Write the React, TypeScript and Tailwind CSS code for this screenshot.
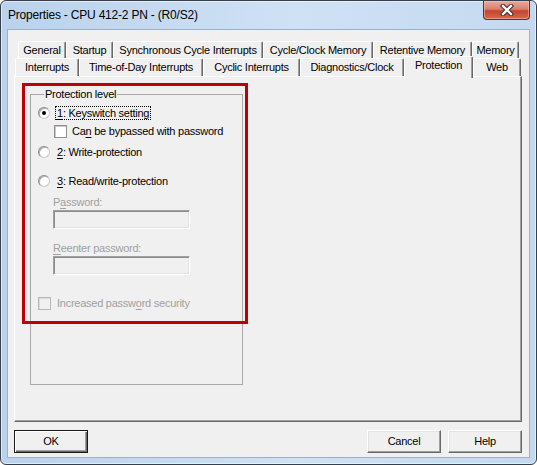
import type { ReactNode } from 'react';

type TabDef = { label: string; w: string; active?: boolean };

const backRow: TabDef[] = [
  { label: 'General', w: 'w-[48px]' },
  { label: 'Startup', w: 'w-[47px]' },
  { label: 'Synchronous Cycle Interrupts', w: 'w-[150px]' },
  { label: 'Cycle/Clock Memory', w: 'w-[110px]' },
  { label: 'Retentive Memory', w: 'w-[99px]' },
  { label: 'Memory', w: 'w-[47px]' },
];

const frontRow: TabDef[] = [
  { label: 'Interrupts', w: 'w-[64px]' },
  { label: 'Time-of-Day Interrupts', w: 'w-[124px]' },
  { label: 'Cyclic Interrupts', w: 'w-[97px]' },
  { label: 'Diagnostics/Clock', w: 'w-[104px]' },
  { label: 'Protection', w: 'w-[69px]', active: true },
  { label: 'Web', w: 'w-[48px]' },
];

function Tab({ tab, tall }: { tab: TabDef; tall?: boolean }) {
  if (tab.active) {
    return (
      <div
        className={`${tab.w} relative z-10 flex h-[22px] -mb-[2px] shrink-0 items-center justify-center rounded-t-[2px] border-l border-t border-r border-l-white border-t-white border-r-[#696969] bg-[#f0f0f0] pb-[4px] shadow-[inset_-1px_0_0_#a0a0a0]`}
      >
        {tab.label}
      </div>
    );
  }
  return (
    <div
      className={`${tab.w} ${tall ? 'h-[18px]' : 'h-[17px]'} flex shrink-0 items-center justify-center rounded-t-[2px] border-l border-t border-r border-l-white border-t-white border-r-[#696969] bg-[#f0f0f0] shadow-[inset_-1px_0_0_#a0a0a0]`}
    >
      {tab.label}
    </div>
  );
}

// mnemonic letter, underlined like a Win32 accelerator
function U({ children }: { children: ReactNode }) {
  return <span className="underline underline-offset-[2px]">{children}</span>;
}

function Radio({ checked }: { checked?: boolean }) {
  return (
    <span className="flex h-[12px] w-[12px] shrink-0 items-center justify-center rounded-full border border-[#8a8a8a] border-r-[#c8c8c8] border-b-[#c8c8c8] bg-white shadow-[inset_1px_1px_0_#b4b4b4]">
      {checked && <span className="h-[4px] w-[4px] rounded-full bg-black" />}
    </span>
  );
}

function Check({ disabled }: { disabled?: boolean }) {
  return (
    <span
      className={
        disabled
          ? 'h-[13px] w-[13px] shrink-0 border border-[#b9b9b9] bg-[#f0f0f0] shadow-[inset_1px_1px_0_#dadada]'
          : 'h-[13px] w-[13px] shrink-0 border border-[#8e8f8f] bg-white shadow-[inset_1px_1px_0_#c9c9c9]'
      }
    />
  );
}

function DisabledInput() {
  return (
    <div className="ml-[15px] mt-[1px] h-[19px] w-[137px] border border-t-[#a0a0a0] border-l-[#a0a0a0] border-r-white border-b-white bg-[#f0f0f0] shadow-[inset_1px_1px_0_#8c8c8c,inset_-1px_-1px_0_#e3e3e3]" />
  );
}

function Button({ children, isDefault, className = '' }: { children: ReactNode; isDefault?: boolean; className?: string }) {
  return (
    <button
      className={
        isDefault
          ? `${className} flex h-[23px] w-[74px] items-center justify-center border border-[#1a1a1a] bg-[#f0f0f0] shadow-[inset_1px_1px_0_#fff,inset_-1px_-1px_0_#696969,inset_-2px_-2px_0_#a0a0a0]`
          : `${className} flex h-[23px] w-[74px] items-center justify-center border border-t-white border-l-white border-r-[#696969] border-b-[#696969] bg-[#f0f0f0] shadow-[inset_-1px_-1px_0_#a0a0a0,inset_1px_1px_0_#e3e3e3]`
      }
    >
      {children}
    </button>
  );
}

function CloseButton() {
  return (
    <div className="mr-[6px] flex h-[19px] w-[47px] items-center justify-center rounded-b-[4px] border border-t-0 border-[#6b2a22] bg-[linear-gradient(180deg,#e9a99b_0%,#d9826f_45%,#c4442c_55%,#d56a4e_100%)] shadow-[inset_0_0_0_1px_rgba(255,200,190,0.5)]">
      <svg width="14" height="12" viewBox="0 0 14 12">
        <path d="M3 2 L11 10 M11 2 L3 10" stroke="#3d2622" strokeWidth="4.4" strokeLinecap="square" />
        <path d="M3 2 L11 10 M11 2 L3 10" stroke="#ffffff" strokeWidth="2.4" strokeLinecap="square" />
      </svg>
    </div>
  );
}

export default function App() {
  return (
    <div className="relative flex h-[465px] w-[537px] flex-col rounded-[6px] border border-[#363f4c] bg-[linear-gradient(90deg,#bad2ec_0%,#cfe1f5_55%,#c4d9f0_100%)] shadow-[inset_0_0_0_1px_rgba(255,255,255,0.55)] font-['Liberation_Sans',Arial,sans-serif] text-[11px] leading-[13px] tracking-[-0.25px] text-black">
      {/* title bar */}
      <div className="flex h-[28px] shrink-0 items-start justify-between">
        <span className="pl-[7px] pt-[7px] text-[12px] leading-[15px] tracking-[-0.2px]">
          Properties - CPU 412-2 PN - (R0/S2)
        </span>
        <CloseButton />
      </div>

      {/* client area */}
      <div className="mx-[6px] mb-[6px] flex flex-1 flex-col border border-[#9db0c6] bg-[#f0f0f0] pl-[6px] pr-[7px]">
        <div className="mt-[11px] ml-[4px] flex">
          {backRow.map((t) => (
            <Tab key={t.label} tab={t} />
          ))}
        </div>
        <div className="ml-[1px] flex h-[18px] items-end">
          {frontRow.map((t) => (
            <Tab key={t.label} tab={t} tall />
          ))}
        </div>

        <div className="h-[346px] border border-t-white border-l-white border-r-[#696969] border-b-[#696969] shadow-[inset_-1px_-1px_0_#a0a0a0]">
          <fieldset className="ml-[15px] mt-[11px] h-[297px] w-[213px] border border-[#a9a9a9] pl-[7px]">
            <legend className="ml-[6px] px-[1px] leading-[13px]">Protection level</legend>

            <div className="mt-[5px] flex h-[14px] items-center">
              <Radio checked />
              <span className="ml-[5px] border border-dotted border-black px-[1px] leading-[12px]">
                <U>1</U>: Keyswitch setting
              </span>
            </div>

            <div className="mt-[4px] ml-[16px] flex h-[14px] items-center">
              <Check />
              <span className="ml-[5px]">
                Ca<U>n</U> be bypassed with password
              </span>
            </div>

            <div className="mt-[7px] flex h-[14px] items-center">
              <Radio />
              <span className="ml-[7px]">
                <U>2</U>: Write-protection
              </span>
            </div>

            <div className="mt-[15px] flex h-[14px] items-center">
              <Radio />
              <span className="ml-[7px]">
                <U>3</U>: Read/write-protection
              </span>
            </div>

            <div className="mt-[7px] ml-[15px] flex h-[14px] items-center text-[#a0a0a0]">
              <span>
                P<U>a</U>ssword:
              </span>
            </div>
            <DisabledInput />

            <div className="mt-[12px] ml-[15px] flex h-[14px] items-center text-[#a0a0a0]">
              <span>
                <U>R</U>eenter password:
              </span>
            </div>
            <DisabledInput />

            <div className="mt-[21px] flex h-[14px] items-center text-[#a0a0a0]">
              <Check disabled />
              <span className="ml-[6px]">
                Increased passw<U>o</U>rd security
              </span>
            </div>
          </fieldset>
        </div>

        <div className="mt-[8px] flex">
          <Button isDefault>OK</Button>
          <Button className="ml-auto">Cancel</Button>
          <Button className="ml-[7px]">Help</Button>
        </div>
      </div>

      {/* red highlight frame drawn over the protection group */}
      <div className="pointer-events-none absolute left-[21px] top-[82px] h-[241px] w-[226px] border-[3px] border-[#c00000]" />
    </div>
  );
}
